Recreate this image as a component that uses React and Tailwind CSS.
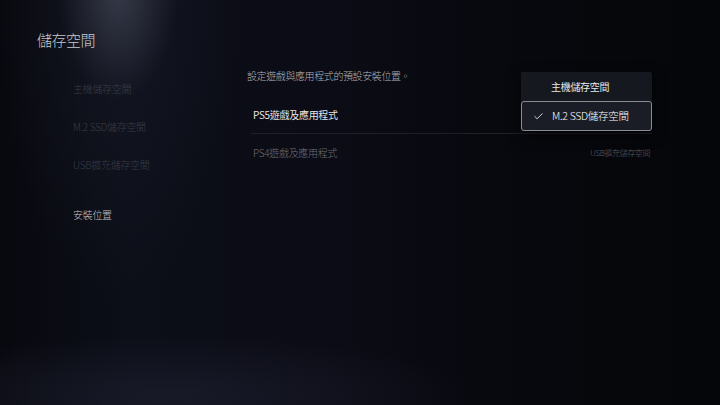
import React from "react";
import { Check } from "lucide-react";

const font = { fontFamily: '"Noto Sans CJK TC", "Noto Sans", sans-serif' };

const navItems = [
  { label: "主機儲存空間", active: false },
  { label: "M.2 SSD儲存空間", active: false },
  { label: "USB擴充儲存空間", active: false },
];

export default function App() {
  return (
    <div
      style={font}
      className="relative w-[720px] h-[405px] overflow-hidden bg-[#08090e] bg-[radial-gradient(ellipse_60px_110px_at_118px_-10px,rgba(105,110,128,0.4),transparent),radial-gradient(ellipse_120px_300px_at_118px_0px,rgba(30,33,48,0.45),transparent),radial-gradient(ellipse_300px_60px_at_170px_395px,rgba(34,36,54,0.55),transparent),linear-gradient(90deg,#08090f_0%,#0c0e18_18%,#0b0c15_45%,#07080d_75%,#050609_100%)]"
    >
      {/* header */}
      <h1 className="pt-[30px] pl-[37px] text-[15px] leading-[20px] font-light text-[#c9cacf] tracking-[-0.5px]">
        儲存空間
      </h1>

      <div className="flex mt-[19px]">
        {/* left nav */}
        <nav className="w-[247px] pl-[73px] flex flex-col">
          {navItems.map((item) => (
            <div
              key={item.label}
              className="h-[38px] flex items-center text-[10px] font-light text-[#383b46] tracking-[-0.3px]"
            >
              {item.label}
            </div>
          ))}
          <div className="mt-[12px] h-[38px] flex items-center text-[10px] font-light text-[#c4c5ca] tracking-[-0.3px]">
            安裝位置
          </div>
        </nav>

        {/* content */}
        <section className="flex-1 pr-[68px]">
          <p className="h-[27px] text-[10px] leading-[14px] font-light text-[#b4b5ba] tracking-[-0.4px]">
            設定遊戲與應用程式的預設安裝位置。
          </p>
          <div className="ml-[4px]">
            <div className="h-[38px] flex items-center px-[2px] border-b border-[#1e2028] text-[10px] text-[#e4e5e8] tracking-[-0.3px]">
              PS5遊戲及應用程式
            </div>
            <div className="h-[37px] flex items-center justify-between px-[2px] text-[10px] font-light text-[#6d6f76] tracking-[-0.3px]">
              <span>PS4遊戲及應用程式</span>
              <span className="text-[8px] text-[#5a5c63] tracking-[-0.4px]">USB擴充儲存空間</span>
            </div>
          </div>
        </section>
      </div>

      {/* dropdown menu */}
      <div className="absolute top-[72px] left-[521px] w-[131px] bg-[#16181f] shadow-[0_4px_14px_rgba(0,0,0,0.6)] rounded-[2px]">
        <div className="h-[29px] flex items-center pl-[30px] text-[10px] text-[#e8e9ec] tracking-[-0.3px]">
          主機儲存空間
        </div>
        <div className="h-[30px] flex items-center border border-[#8a8c94] rounded-[3px] bg-[#1b1d26] text-[10.5px] font-light text-white tracking-[-0.3px]">
          <Check className="w-[11px] h-[11px] ml-[11px] mr-[8px] text-[#e6e7ea]" strokeWidth={2} />
          M.2 SSD儲存空間
        </div>
      </div>
    </div>
  );
}
